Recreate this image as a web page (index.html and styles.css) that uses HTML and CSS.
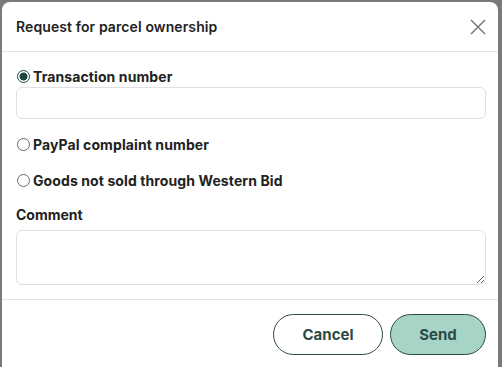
FILE: index.html
```html
<!DOCTYPE html>
<html>
<head>
<meta charset="utf-8">
<link rel="stylesheet" href="styles.css">
</head>
<body>
<div class="modal">
  <div class="header">
    <div class="title">Request for parcel ownership</div>
    <svg class="close" width="16" height="16" viewBox="0 0 16 16"><path d="M1 1L15 15M15 1L1 15" stroke="#6f6f6f" stroke-width="1.4" fill="none"/></svg>
  </div>
  <div class="body">
    <label class="opt first"><span class="radio checked"></span>Transaction number</label>
    <div class="input"></div>
    <label class="opt second"><span class="radio"></span>PayPal complaint number</label>
    <label class="opt third"><span class="radio"></span>Goods not sold through Western Bid</label>
    <div class="label">Comment</div>
    <textarea class="area"></textarea>
  </div>
  <div class="footer">
    <button class="btn cancel">Cancel</button>
    <button class="btn send">Send</button>
  </div>
</div>
</body>
</html>
```
FILE: styles.css
```css
html, body { margin: 0; padding: 0; }
body {
  background: #7a7a7a;
  width: 502px;
  height: 367px;
  overflow: hidden;
  font-family: Inter, "Liberation Sans", sans-serif;
  color: #1f1f1f;
}
.modal {
  margin: 2px 4px 0 2px;
  height: 365px;
  background: #fff;
  border-radius: 8px 8px 0 0;
}
.header {
  height: 49px;
  border-bottom: 1px solid #e4e4e4;
  display: flex;
  align-items: center;
  justify-content: space-between;
  padding: 0 12px 0 14px;
}
.title {
  font-size: 14px;
  font-weight: 600;
  color: #222;
  letter-spacing: 0.1px;
}
.body {
  padding: 14px 12px 0 14px;
  border-bottom: 1px solid #e4e4e4;
  height: 248px;
  box-sizing: border-box;
}
.opt {
  display: flex;
  align-items: center;
  height: 20px;
  font-size: 14px;
  font-weight: 650;
  color: #222;
  letter-spacing: 0.1px;
}
.radio {
  width: 11px;
  height: 11px;
  border: 1px solid #6a6a6a;
  border-radius: 50%;
  margin: 0 3px 0 1px;
  box-sizing: content-box;
  flex: none;
}
.radio.checked {
  border-color: #1f4840;
  background: radial-gradient(circle, #1f4840 0 3.7px, #fff 4.3px);
}
.input {
  margin-top: 1px;
  height: 30px;
  border: 1px solid #e0e0e0;
  border-radius: 6px;
}
.second { margin-top: 15px; }
.third { margin-top: 16px; }
.label {
  margin-top: 15px;
  height: 20px;
  line-height: 20px;
  font-size: 14px;
  font-weight: 650;
  color: #222;
}
.area {
  display: block;
  margin-top: 5px;
  width: 100%;
  height: 55px;
  box-sizing: border-box;
  border: 1px solid #e0e0e0;
  border-radius: 6px;
  resize: vertical;
  font-family: inherit;
}
.footer {
  display: flex;
  justify-content: flex-end;
  gap: 7px;
  padding: 14px 12px 0 0;
}
.btn {
  height: 41px;
  border-radius: 21px;
  border: 1px solid #2c4a44;
  font-family: Inter, "Liberation Sans", sans-serif;
  font-size: 15px;
  font-weight: 650;
  color: #2d4a45;
  padding: 0;
}
.cancel { width: 110px; background: #fff; }
.send { width: 96px; background: #a6d5c8; }
```
